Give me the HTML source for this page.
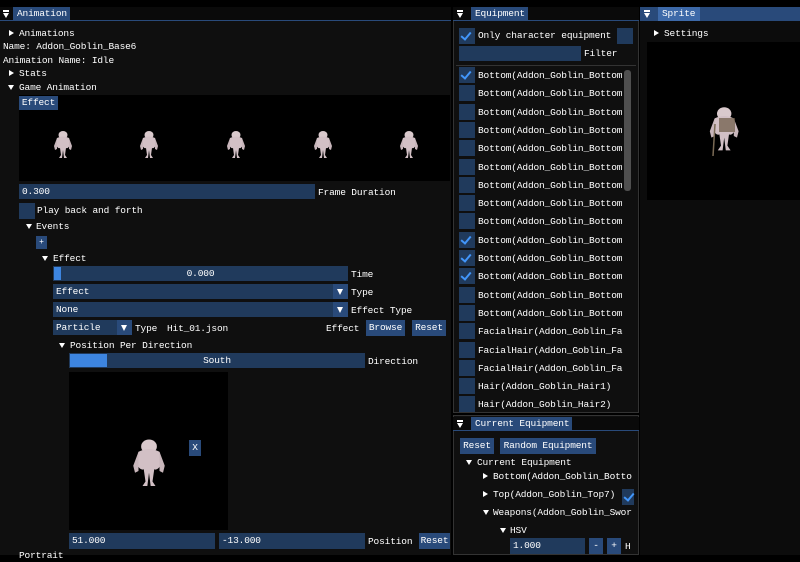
<!DOCTYPE html>
<html><head><meta charset="utf-8"><style>
*{margin:0;padding:0;box-sizing:border-box}
body{width:800px;height:555px;background:#000;overflow:hidden;position:relative;font-family:"Liberation Mono",monospace;font-size:9.5px;letter-spacing:-0.15px;color:#fff}
.a{position:absolute;white-space:nowrap}
.t{position:absolute;white-space:nowrap;line-height:13px}
.win{position:absolute;background:#0f0f0f}
.fr{position:absolute;background:#203a5c}
.bt{position:absolute;background:#294a7a;line-height:15px;text-align:center}
.blk{position:absolute;background:#000}
.cb{position:absolute;width:16px;height:16px;background:#203a5c}
.ck::after{content:"";position:absolute;left:4px;top:2px;width:4px;height:8px;border:solid #4296fa;border-width:0 2.5px 2.5px 0;transform:rotate(40deg)}
.tr{position:absolute;width:0;height:0;border-left:5px solid #fff;border-top:3px solid transparent;border-bottom:3px solid transparent}
.td{position:absolute;width:0;height:0;border-top:5px solid #fff;border-left:3px solid transparent;border-right:3px solid transparent}
.arr{position:absolute;width:15px;background:#294a7a}
.arr::after{content:"";position:absolute;left:4px;top:5px;border-top:6px solid #fff;border-left:3.5px solid transparent;border-right:3.5px solid transparent}
.tb{position:absolute;height:14px;line-height:14px;padding-left:4px}
.ic{position:absolute;width:7px;height:7px}
</style></head><body>
<svg width="0" height="0" style="position:absolute"><defs>
<g id="gob"><ellipse cx="12" cy="6" rx="4.5" ry="4" fill="#d9c9cc"/><path d="M6 9 Q12 6 18 9 L19 16 Q17 20 15 19 L14 26 L16 29 L13 29 L12 21 L11 29 L8 29 L10 26 L9 19 Q7 20 5 16Z" fill="#d2c0c5"/><path d="M6 9 L3 17 L4 21 L6 20 L6 14Z M18 9 L21 17 L20 21 L18 20 L18 14Z" fill="#c8b6bb"/></g>
</defs></svg>

<!-- Animation window -->
<div class="win" style="left:0;top:7px;width:451px;height:548px"></div>
<div class="a" style="left:0;top:7px;width:451px;height:14px;background:#0a0a0a;border-bottom:1px solid #294a7a"></div>
<div class="a" style="left:3px;top:10px;width:6px;height:2px;background:#fff"></div><div class="td" style="left:3px;top:13px"></div>
<div class="tb" style="left:13px;top:7px;width:57px;background:#294a7a">Animation</div>

<div class="tr" style="left:9px;top:30px"></div><div class="t" style="left:19px;top:27px">Animations</div>
<div class="t" style="left:3px;top:40px">Name: Addon_Goblin_Base6</div>
<div class="t" style="left:3px;top:54px">Animation Name: Idle</div>
<div class="tr" style="left:9px;top:70px"></div><div class="t" style="left:19px;top:67px">Stats</div>
<div class="td" style="left:8px;top:85px"></div><div class="t" style="left:19px;top:81px">Game Animation</div>
<div class="blk" style="left:19px;top:95px;width:431px;height:86px"></div>
<div class="bt" style="left:19px;top:96px;width:39px;height:14px;line-height:14px">Effect</div>
<svg class="a" style="left:0;top:0" width="451" height="200">
<use href="#gob" x="51" y="129"/><use href="#gob" x="137" y="129"/><use href="#gob" x="224" y="129"/><use href="#gob" x="311" y="129"/><use href="#gob" x="397" y="129"/>
</svg>
<div class="fr" style="left:19px;top:184px;width:296px;height:15px;line-height:15px;padding-left:3px">0.300</div>
<div class="t" style="left:318px;top:186px">Frame Duration</div>
<div class="cb" style="left:19px;top:203px"></div><div class="t" style="left:37px;top:204px">Play back and forth</div>
<div class="td" style="left:26px;top:224px"></div><div class="t" style="left:36px;top:220px">Events</div>
<div class="bt" style="left:36px;top:236px;width:11px;height:13px;line-height:13px;font-size:8px">+</div>
<div class="td" style="left:42px;top:256px"></div><div class="t" style="left:53px;top:252px">Effect</div>
<div class="fr" style="left:53px;top:266px;width:295px;height:15px;line-height:15px;text-align:center">0.000</div>
<div class="a" style="left:54px;top:267px;width:7px;height:13px;background:#3d85e0"></div>
<div class="t" style="left:351px;top:268px">Time</div>
<div class="fr" style="left:53px;top:284px;width:295px;height:15px;line-height:15px;padding-left:3px">Effect</div>
<div class="arr" style="left:333px;top:284px;height:15px"></div><div class="t" style="left:351px;top:286px">Type</div>
<div class="fr" style="left:53px;top:302px;width:295px;height:15px;line-height:15px;padding-left:3px">None</div>
<div class="arr" style="left:333px;top:302px;height:15px"></div><div class="t" style="left:351px;top:304px">Effect Type</div>
<div class="fr" style="left:53px;top:320px;width:79px;height:15px;line-height:15px;padding-left:3px">Particle</div>
<div class="arr" style="left:117px;top:320px;height:15px"></div>
<div class="t" style="left:135px;top:322px">Type</div><div class="t" style="left:167px;top:322px">Hit_01.json</div>
<div class="t" style="left:326px;top:322px">Effect</div>
<div class="bt" style="left:366px;top:320px;width:39px;height:16px">Browse</div>
<div class="bt" style="left:412px;top:320px;width:34px;height:16px">Reset</div>
<div class="td" style="left:59px;top:343px"></div><div class="t" style="left:70px;top:339px">Position Per Direction</div>
<div class="fr" style="left:69px;top:353px;width:296px;height:15px;line-height:15px;text-align:center">South</div>
<div class="a" style="left:70px;top:354px;width:37px;height:13px;background:#3d85e0"></div>
<div class="t" style="left:368px;top:355px">Direction</div>
<div class="blk" style="left:69px;top:372px;width:159px;height:158px"></div>
<svg class="a" style="left:128px;top:436px" width="50" height="50"><use href="#gob" transform="scale(1.75)"/></svg>
<div class="bt" style="left:189px;top:440px;width:12px;height:16px;line-height:16px">X</div>
<div class="fr" style="left:69px;top:533px;width:146px;height:16px;line-height:16px;padding-left:3px">51.000</div>
<div class="fr" style="left:219px;top:533px;width:146px;height:16px;line-height:16px;padding-left:3px">-13.000</div>
<div class="t" style="left:368px;top:535px">Position</div>
<div class="bt" style="left:419px;top:533px;width:31px;height:16px;line-height:16px">Reset</div>
<div class="t" style="left:19px;top:549px">Portrait</div>

<!-- Equipment window -->
<div class="win" style="left:453px;top:7px;width:186px;height:406px;border:1px solid #333"></div>
<div class="a" style="left:453px;top:7px;width:186px;height:14px;background:#0a0a0a;border-bottom:1px solid #294a7a"></div>
<div class="a" style="left:457px;top:10px;width:6px;height:2px;background:#fff"></div><div class="td" style="left:457px;top:13px"></div>
<div class="tb" style="left:471px;top:7px;width:57px;background:#294a7a">Equipment</div>
<div class="cb ck" style="left:459px;top:28px"></div><div class="t" style="left:478px;top:29px">Only character equipment</div>
<div class="cb" style="left:617px;top:28px"></div>
<div class="fr" style="left:459px;top:46px;width:122px;height:15px"></div><div class="t" style="left:584px;top:47px">Filter</div>
<div class="a" style="left:456px;top:65px;width:180px;height:1px;background:#333"></div>
<div class="a" style="left:624px;top:70px;width:7px;height:121px;background:#4f4f4f;border-radius:3px"></div>
<div id="list"></div>

<!-- Current Equipment -->
<div class="win" style="left:453px;top:415px;width:186px;height:140px;border:1px solid #333"></div>
<div class="a" style="left:453px;top:417px;width:186px;height:14px;background:#0a0a0a;border-bottom:1px solid #294a7a"></div>
<div class="a" style="left:457px;top:420px;width:6px;height:2px;background:#fff"></div><div class="td" style="left:457px;top:423px"></div>
<div class="tb" style="left:471px;top:417px;width:101px;background:#294a7a">Current Equipment</div>
<div class="bt" style="left:460px;top:438px;width:34px;height:16px;line-height:16px">Reset</div>
<div class="bt" style="left:500px;top:438px;width:96px;height:16px;line-height:16px">Random Equipment</div>
<div class="td" style="left:466px;top:460px"></div><div class="t" style="left:477px;top:456px">Current Equipment</div>
<div class="tr" style="left:483px;top:473px"></div><div class="t" style="left:493px;top:470px">Bottom(Addon_Goblin_Botto</div>
<div class="tr" style="left:483px;top:491px"></div><div class="t" style="left:493px;top:488px">Top(Addon_Goblin_Top7)</div>
<div class="cb ck" style="left:622px;top:489px;width:12px"></div>
<div class="td" style="left:483px;top:510px"></div><div class="t" style="left:493px;top:506px">Weapons(Addon_Goblin_Swor</div>
<div class="td" style="left:500px;top:528px"></div><div class="t" style="left:510px;top:524px">HSV</div>
<div class="fr" style="left:510px;top:538px;width:75px;height:16px;line-height:16px;padding-left:3px">1.000</div>
<div class="bt" style="left:589px;top:538px;width:14px;height:16px;line-height:16px">-</div>
<div class="bt" style="left:607px;top:538px;width:14px;height:16px;line-height:16px">+</div>
<div class="t" style="left:625px;top:540px">H</div>

<!-- Sprite -->
<div class="win" style="left:640px;top:7px;width:160px;height:548px;background:#0c0c0c"></div>
<div class="a" style="left:640px;top:7px;width:160px;height:14px;background:#294a7a"></div>
<div class="a" style="left:644px;top:10px;width:6px;height:2px;background:#fff"></div><div class="td" style="left:644px;top:13px"></div>
<div class="tb" style="left:658px;top:7px;width:42px;background:#3d69a8">Sprite</div>
<div class="tr" style="left:654px;top:30px"></div><div class="t" style="left:664px;top:27px">Settings</div>
<div class="blk" style="left:647px;top:42px;width:153px;height:158px"></div>
<svg class="a" style="left:705px;top:104px" width="50" height="64"><g transform="scale(1.6)"><use href="#gob"/></g><path d="M10 20 L8 52" stroke="#7a6a55" stroke-width="1.5"/><rect x="14" y="14" width="16" height="14" fill="#6b5a45" opacity=".7"/></svg>

<script>
var rows=[["Bottom(Addon_Goblin_Bottom",1],["Bottom(Addon_Goblin_Bottom",0],["Bottom(Addon_Goblin_Bottom",0],["Bottom(Addon_Goblin_Bottom",0],["Bottom(Addon_Goblin_Bottom",0],["Bottom(Addon_Goblin_Bottom",0],["Bottom(Addon_Goblin_Bottom",0],["Bottom(Addon_Goblin_Bottom",0],["Bottom(Addon_Goblin_Bottom",0],["Bottom(Addon_Goblin_Bottom",1],["Bottom(Addon_Goblin_Bottom",1],["Bottom(Addon_Goblin_Bottom",1],["Bottom(Addon_Goblin_Bottom",0],["Bottom(Addon_Goblin_Bottom",0],["FacialHair(Addon_Goblin_Fa",0],["FacialHair(Addon_Goblin_Fa",0],["FacialHair(Addon_Goblin_Fa",0],["Hair(Addon_Goblin_Hair1)",0],["Hair(Addon_Goblin_Hair2)",0]];
var h="";rows.forEach(function(r,i){var y=Math.round(67+i*18.3);h+='<div class="cb'+(r[1]?' ck':'')+'" style="left:459px;top:'+y+'px"></div><div class="t" style="left:478px;top:'+(y+2)+'px">'+r[0]+'</div>';});
document.getElementById("list").outerHTML=h;
</script>
</body></html>
